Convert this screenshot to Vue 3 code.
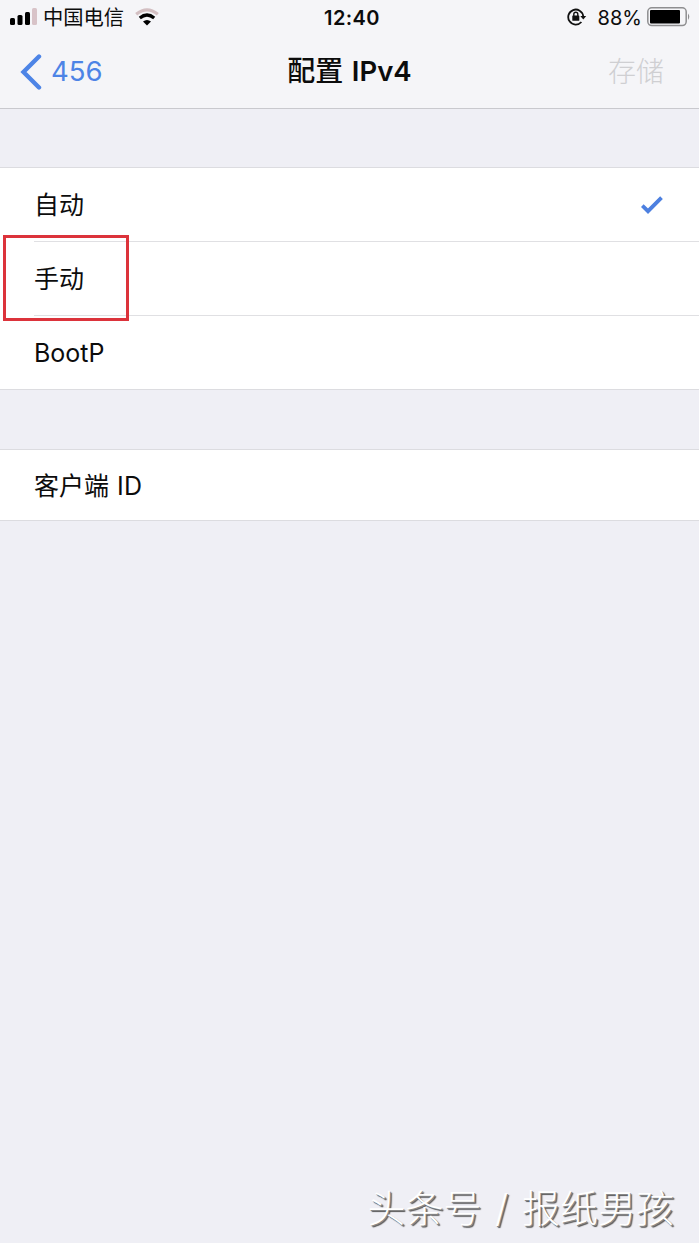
<script setup>
import { ref } from 'vue';

const modes = [
    { id: 'auto', label: '自动' },
    { id: 'manual', label: '手动' },
    { id: 'bootp', label: 'BootP', latin: true },
];
const selected = ref('auto');
const marked = 'manual';
</script>
<template>
    <div class="screen">
        <header class="header">
            <div class="status">
                <div class="status-left">
                    <svg class="signal" width="28" height="18" viewBox="0 0 28 18">
                        <rect x="0" y="10" width="5" height="7" rx="1.5" fill="#000" />
                        <rect x="7.5" y="7" width="5" height="10" rx="1.5" fill="#000" />
                        <rect x="15" y="4" width="5" height="13" rx="1.5" fill="#000" />
                        <rect x="22" y="0" width="5" height="17" rx="1.5" fill="#d8c3c8" />
                    </svg>
                    <span class="carrier">中国电信</span>
                    <svg class="wifi" width="24" height="18" viewBox="0 0 24 18">
                        <path d="M1.2 6.2 Q12 -2.6 22.8 6.2" fill="none" stroke="#d3bfc2" stroke-width="3.2" />
                        <path d="M4.8 10 Q12 4 19.2 10" fill="none" stroke="#000" stroke-width="3.2" />
                        <path d="M8 13.4 Q12 10.4 16 13.4 L12 17.4 Z" fill="#000" />
                    </svg>
                </div>
                <span class="time">12:40</span>
                <div class="status-right">
                    <svg class="lock" width="20" height="18" viewBox="0 0 20 18">
                        <path d="M14.4 14 A7.5 7.5 0 1 1 16.2 8.2" fill="none" stroke="#111" stroke-width="1.8" />
                        <path d="M13.3 8 H19.2 L16.3 11.6 Z" fill="#111" />
                        <rect x="5.3" y="7.4" width="7" height="5.4" rx="0.6" fill="#111" />
                        <path d="M6.8 8 V6.2 A2 2 0 0 1 10.8 6.2 V8" fill="none" stroke="#111" stroke-width="1.4" />
                    </svg>
                    <span class="percent">88%</span>
                    <svg class="battery" width="44" height="20" viewBox="0 0 44 20">
                        <rect x="0.8" y="0.8" width="38.4" height="17.8" rx="4" fill="none" stroke="#8e8e90" stroke-width="1.5" />
                        <rect x="3" y="3" width="30" height="13.4" rx="1" fill="#000" />
                        <path d="M41 6.5 Q43.6 9.7 41 12.9 Z" fill="#8e8e90" />
                    </svg>
                </div>
            </div>
            <nav class="nav">
                <a class="back">
                    <svg width="22" height="36" viewBox="0 0 22 36">
                        <path d="M19 2.5 L3.5 18 L19 33.5" fill="none" stroke="#4d84e6" stroke-width="4.4" stroke-linecap="round" />
                    </svg>
                    <span class="back-text">456</span>
                </a>
                <h1 class="title">配置 <span class="title-latin">IPv4</span></h1>
                <span class="save">存储</span>
            </nav>
        </header>

        <ul class="group">
            <li v-for="mode in modes" :key="mode.id" class="row" @click="selected = mode.id">
                <span class="label" :class="{ latin: mode.latin }">{{ mode.label }}</span>
                <svg v-if="selected === mode.id" class="check" width="22" height="18" viewBox="0 0 22 18">
                    <path d="M1.3 9.6 L7 15.2 L20.5 1.6" fill="none" stroke="#4d80e0" stroke-width="3.8" />
                </svg>
                <div v-if="mode.id === marked" class="marker"></div>
            </li>
        </ul>

        <ul class="group client">
            <li class="row">
                <span class="label">客户端 <span class="id">ID</span></span>
            </li>
        </ul>

        <div class="watermark">头条号 / 报纸男孩</div>
    </div>
</template>
<style>
body {
    margin: 0;
    background: #efeff5;
}
</style>
<style scoped>
.screen {
    position: relative;
    height: 1243px;
    overflow: hidden;
    background: #efeff5;
    color: #0c0c0c;
    font-family: Inter, "Noto Sans CJK SC", sans-serif;
}

.header {
    box-sizing: border-box;
    height: 109px;
    background: #f5f5f8;
    border-bottom: 1px solid #c9c9ce;
}

.status {
    display: grid;
    grid-template-columns: 1fr auto 1fr;
    align-items: center;
    height: 35px;
    padding: 0 8px 0 10px;
    line-height: 34px;
}

.status-left,
.status-right {
    display: flex;
    align-items: center;
}

.status-right {
    justify-content: flex-end;
}

.signal,
.battery,
.lock {
    margin-bottom: 1px;
}

.wifi {
    margin-bottom: 1px;
}

.carrier {
    margin: 0 11px 0 5px;
    font-size: 20.3px;
}

.time {
    padding-left: 3px;
    font-size: 20px;
    font-weight: 600;
    letter-spacing: 0.4px;
}

.percent {
    margin: 0 5px 0 11px;
    font-size: 20px;
}

.nav {
    display: grid;
    grid-template-columns: 1fr auto 1fr;
    align-items: center;
    height: 73px;
    padding: 0 35px 0 20px;
}

.back {
    display: flex;
    align-items: center;
    gap: 9px;
    color: #4d84e6;
}

.back-text {
    margin-top: -1px;
    font-size: 27.5px;
}

.title {
    margin: -1px 0 0;
    padding-left: 15px;
    font-size: 28px;
    font-weight: 500;
    line-height: 40px;
}

.title-latin {
    margin-left: 1px;
    font-size: 27.5px;
    font-weight: 600;
}

.save {
    justify-self: end;
    margin-top: -4px;
    color: #cfcfd2;
    font-size: 28px;
    font-weight: 300;
}

.group {
    margin: 58px 0 0;
    padding: 0;
    list-style: none;
    background: #fff;
    border-top: 1px solid #dcdce0;
    border-bottom: 1px solid #dcdce0;
}

.row {
    position: relative;
    display: flex;
    align-items: center;
    justify-content: space-between;
    box-sizing: border-box;
    height: 74px;
    margin-left: 34px;
    padding-right: 36px;
}

.row:first-child {
    height: 73px;
}

.row + .row {
    border-top: 1px solid #e0e0e3;
}

.client {
    margin-top: 59px;
}

.client .row {
    height: 70px;
}

.client .row:first-child {
    height: 70px;
}

.label {
    padding-bottom: 3px;
    font-size: 25px;
}

.latin {
    padding-bottom: 0;
}

.id {
    margin-left: 1px;
    letter-spacing: 0.3px;
}

.marker {
    position: absolute;
    z-index: 1;
    top: -7px;
    left: -31px;
    box-sizing: border-box;
    width: 126px;
    height: 86px;
    border: 3px solid #dc333b;
}

.watermark {
    position: absolute;
    right: 25px;
    bottom: 7px;
    color: #fff;
    font-size: 38px;
    font-weight: 300;
    line-height: 56px;
    word-spacing: 3px;
    white-space: nowrap;
    text-shadow: 1px 1px 0 #888, 2px 2px 1px #555;
}
</style>
